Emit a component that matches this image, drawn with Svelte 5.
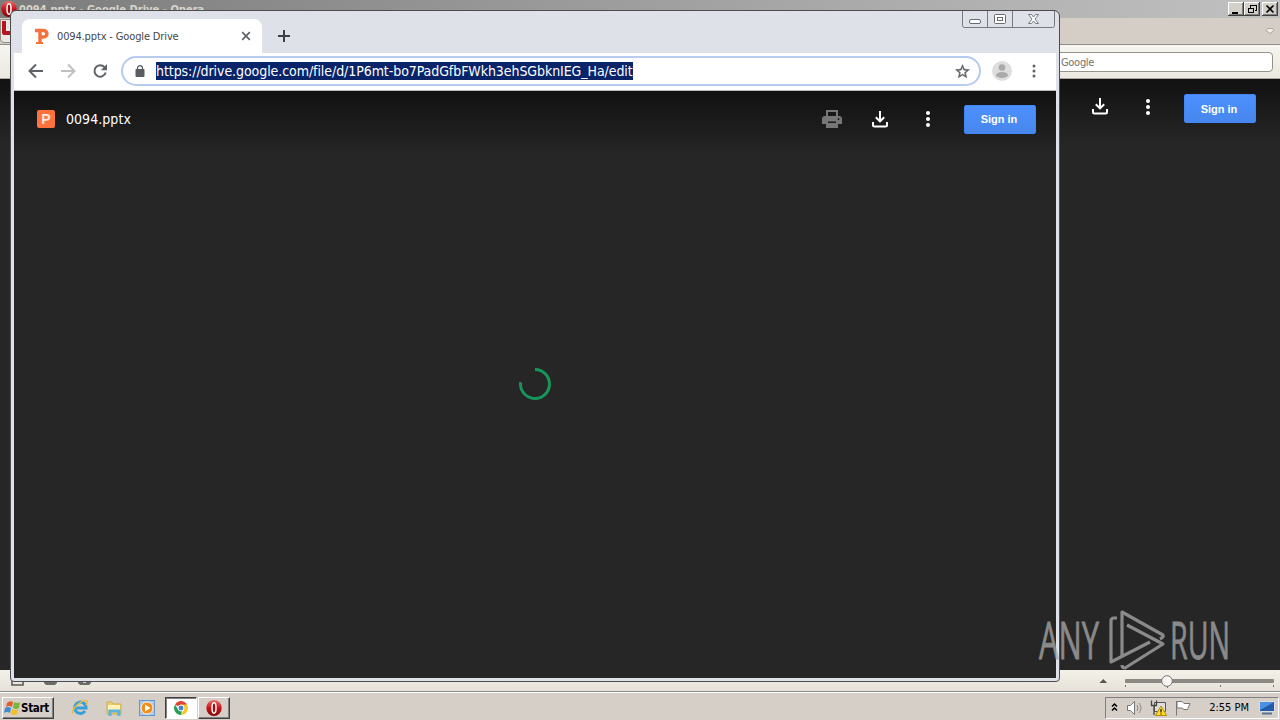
<script lang="ts">
  const fileName = '0094.pptx';
  const url = 'https://drive.google.com/file/d/1P6mt-bo7PadGfbFWkh3ehSGbknIEG_Ha/edit';
</script>

{#snippet downloadIcon()}
  <svg class="icon" width="16" height="17" viewBox="0 0 16 17" fill="none" stroke="#fff" stroke-width="2">
    <path d="M8 0v10M3.800 6.200L8 10.400l4.200-4.200M1 11v3q0 1.500 1.500 1.500h11Q15 15.500 15 14v-3" />
  </svg>
{/snippet}

{#snippet dots(color: string, r: number, gap: number)}
  <svg class="icon" width="6" height="18" viewBox="-3 -9 6 18" fill={color}>
    <circle cy={-gap} {r} /><circle {r} /><circle cy={gap} {r} />
  </svg>
{/snippet}

{#snippet operaIcon()}
  <svg class="icon" width="18" height="18" viewBox="0 0 18 18">
    <defs>
      <linearGradient id="opera" x2="0" y2="1">
        <stop stop-color="#ee7068" /><stop offset=".5" stop-color="#c8151b" /><stop offset="1" stop-color="#850509" />
      </linearGradient>
    </defs>
    <ellipse cx="9" cy="9" rx="7.7" ry="8" fill="url(#opera)" />
    <ellipse cx="9" cy="9" rx="2" ry="5.2" fill="#a00b10" stroke="#fff" stroke-width="1.500" />
  </svg>
{/snippet}

<div class="desktop">
  <section class="opera">
    <header class="opera-title">
      <span class="opera-logo">{@render operaIcon()}</span>
      <span class="opera-name">{fileName} - Google Drive - Opera</span>
      <div class="classic-buttons">
        <svg width="50" height="14" viewBox="0 0 50 14" shape-rendering="crispEdges">
          {#each [0, 16, 34] as x}
            <g transform="translate({x} 0)">
              <path fill="#404040" d="M0 0h16v14H0z" />
              <path fill="#fff" d="M0 0h15v13H0z" />
              <path fill="#808080" d="M1 1h14v12H1z" />
              <path fill="#d4d0c8" d="M1 1h13v11H1z" />
            </g>
          {/each}
          <path fill="#000" d="M4 10h6v2H4z" />
          <path fill="none" stroke="#000" d="M22.500 5.500V3h6v5h-2M22 3h7M20.500 6.500h5v4h-5zM20 6h6" />
          <path shape-rendering="auto" fill="none" stroke="#000" stroke-width="1.700" d="M38.500 3.500l7 7m0-7l-7 7" />
        </svg>
      </div>
    </header>
    <div class="opera-tabs">
      <span class="opera-menu"><i></i></span>
      <svg width="10" height="8" viewBox="0 0 10 8"><path d="M2.500 1.500h5L9 3.500l-4 3-4-3z" fill="#eeece8" stroke="#aaa69f" /></svg>
    </div>
    <div class="opera-tools"><div class="search">Google</div></div>
    <div class="page opera-page">
      {@render downloadIcon()}
      {@render dots('#fff', 2, 6)}
      <button class="signin">Sign in</button>
    </div>
    <footer class="opera-status">
      <svg class="panel-icons" width="84" height="17" viewBox="0 0 84 17" fill="none" stroke="#5d5c59" stroke-width="1.600">
        <path d="M2 4v11h11V5" /><path fill="#6d6c69" d="M34 11h13v2l-2 2h-9l-2-2zM68 11h13v2l-2 2h-9l-2-2z" stroke="none" /><path d="M73 12h3" stroke="#eee" />
      </svg>
      <svg width="181" height="20" viewBox="0 0 181 20">
        <path d="M5.500 13l3.800-4 3.800 4z" fill="#555" />
        <rect x="31" y="9" width="149" height="4" rx="1" fill="#8c8984" />
        <path d="M31.500 15v2M73.500 15v3M126.500 15v2M179.500 15v2" stroke="#77746f" />
        <circle cx="73" cy="11" r="5.300" fill="#f8f7f4" stroke="#777" />
      </svg>
    </footer>
  </section>

  <section class="chrome">
    <header class="tabstrip">
      <div class="tab">
        <svg width="14" height="17" viewBox="0 0 14 17" fill="none" stroke="#f5713e"><path stroke-width="3.400" d="M0 2.500h8.700a3 3 0 0 1 0 6.500H5M5 1v14" /><path stroke-width="2" d="M1 15h7" /></svg>
        <span class="tab-name">{fileName} - Google Drive</span>
        <svg width="10" height="10" viewBox="0 0 10 10" stroke="#5f6368" stroke-width="1.700"><path d="M1.200 1.200l7.600 7.600m0-7.600L1.200 8.800" /></svg>
      </div>
      <svg class="newtab" width="12" height="12" viewBox="0 0 12 12" stroke="#3c4043" stroke-width="2"><path d="M6 0v12M0 6h12" /></svg>
      <svg class="winbuttons" width="94" height="18" viewBox="0 0 94 18" fill="none" stroke="#777a80">
        <path d="M.5 0v14.500q0 2 2 2h88q2 0 2-2V0M25.500 0v16.500M50.500 0v16.500" />
        <rect x="7.500" y="8.500" width="11" height="4" rx="1.500" fill="#fff" stroke="#666970" />
        <rect x="32.500" y="3.500" width="11" height="9" rx="1" fill="#fff" stroke="#666970" />
        <rect x="35.500" y="6.500" width="5" height="3" stroke="#666970" />
        <path d="M66.500 3.500h3l2 2.500 2-2.500h3L73 8l3.500 4.500h-3l-2-2.500-2 2.500h-3L70 8z" fill="#fff" stroke="#777a80" />
      </svg>
    </header>
    <div class="toolbar">
      <svg class="nav" width="94" height="18" viewBox="0 0 94 18" fill="none" stroke="#5f6368" stroke-width="2">
        <path d="M15 9H2M8 2.500L1.500 9 8 15.500" />
        <path stroke="#bfc0c2" d="M33 9h13M40 2.500L46.500 9 40 15.500" />
        <path d="M76.500 5.200A5.700 5.700 0 1 0 77.700 10.500" />
        <path fill="#5f6368" stroke="none" d="M79 2v6.200h-6.200z" />
      </svg>
      <div class="omnibox">
        <svg width="10" height="12" viewBox="0 0 10 12"><path d="M2.500 5V3.200a2.500 2.500 0 0 1 5 0V5" fill="none" stroke="#5a5d61" stroke-width="1.300" /><rect x=".5" y="4" width="9" height="8" rx="1" fill="#5a5d61" /></svg>
        <span class="url">{url}</span>
        <svg class="star" width="17" height="17" viewBox="0 0 24 24" fill="#5f6368" stroke="#5f6368" stroke-width=".5"><path d="M22 9.240l-7.190-.62L12 2 9.190 8.630 2 9.240l5.460 4.730L5.820 21 12 17.270 18.180 21l-1.630-7.030L22 9.240zM12 15.400l-3.760 2.270 1-4.280-3.320-2.880 4.380-.38L12 6.100l1.710 4.040 4.380.38-3.320 2.880 1 4.280L12 15.400z" /></svg>
      </div>
      <svg class="avatar" width="20" height="20" viewBox="0 0 20 20"><circle cx="10" cy="10" r="10" fill="#dedede" /><circle cx="10" cy="6.500" r="3.300" fill="#aaa" /><ellipse cx="10" cy="14" rx="6" ry="3" fill="#aaa" /></svg>
      {@render dots('#5f6368', 1.5, 5)}
    </div>
    <main class="page chrome-page">
      <div class="drivebar">
        <span class="ppt">P</span>
        <span class="filename">{fileName}</span>
        <svg class="printer" width="20" height="18" viewBox="0 0 20 18" fill="#777">
          <path fill-rule="evenodd" d="M4 0h12v6h1a3 3 0 0 1 3 3v5h-4v4H4v-4H0V9a3 3 0 0 1 3-3h1zM6 2v4h8V2zM6 11.500V16h8v-4.500zM15.700 8.300h1.600v1.600h-1.600z" />
          <path d="M6 13h8v3H6z" />
        </svg>
        {@render downloadIcon()}
        {@render dots('#fff', 2, 6)}
        <button class="signin">Sign in</button>
      </div>
      <div class="loading">
        <svg width="34" height="34" viewBox="-17 -17 34 34"><path d="M0-14.500A14.500 14.500 0 1 1-14.400-1.800" fill="none" stroke="#18955b" stroke-width="3" /></svg>
      </div>
    </main>
  </section>

  <svg class="watermark" width="220" height="88" viewBox="-12 -12 220 88" fill="none" stroke="#a6a6a6" stroke-width="3.200" opacity=".78">
    <text x="2" y="50" textLength="60" lengthAdjust="spacingAndGlyphs">ANY</text>
    <text x="133" y="50" textLength="60" lengthAdjust="spacingAndGlyphs">RUN</text>
    <path stroke-linejoin="round" d="M80 9h-3q-3 0-3 3v41l39-20" />
    <path stroke-linejoin="round" d="M85 47V3l41 23q1 2-3 4" />
    <path stroke-linejoin="round" d="M90 16l36 19-38 24q-3 0-3-3" />
  </svg>

  <footer class="taskbar">
    <button class="start">
      <svg width="17" height="16" viewBox="0 0 17 16"><path fill="#e45b2d" d="M3 3q3-3 6-1L8 7Q5 5 2 7z" /><path fill="#79b63a" d="M10 2q3 2 6 0l-1 6q-3 2-6 0z" /><path fill="#3d8bd4" d="M1 8q3-2 6 0l-1 5q-3-2-6 0z" /><path fill="#f2bf27" d="M8 9q3 2 6 0l-1 5q-3 2-6 0z" /></svg>
      Start
    </button>
    <div class="quick">
      <svg width="18" height="18" viewBox="0 0 18 18" fill="none"><path d="M14 12a5.700 5.700 0 1 1 1-3H5" stroke="#36a0dc" stroke-width="3" /><path d="M2 15C-1 11 12-1 16 2c1 1 0 3-1 4" stroke="#e8bb42" stroke-width="1.500" /></svg>
      <svg width="18" height="18" viewBox="0 0 18 18"><path fill="#edcf70" stroke="#d4ad47" d="M2 3h5l1 2h8v10H2z" /><path fill="#fff2b8" d="M3 6h12v5H3z" /><path fill="none" stroke="#5ab4dc" stroke-width="3" d="M5 17v-5h9v5" /></svg>
      <svg width="16" height="16" viewBox="0 0 16 16"><rect x=".5" y=".5" width="15" height="15" fill="#a8cbea" stroke="#6598c7" /><circle cx="8" cy="8" r="6" fill="#f38b18" stroke="#fff1d8" /><path fill="#fff" d="M6 4.500v7L11.500 8z" /></svg>
    </div>
    <button class="task active">
      <svg width="14" height="14" viewBox="-7 -7 14 14"><path fill="#e04434" d="M0 0L-6-3.500A7 7 0 0 1 6-3.500z" /><path fill="#f6c72d" d="M0-3.500H6A7 7 0 0 1 0 7L3 1.500z" /><path fill="#289d54" d="M-6-3.500L-3 1.500 1 3 0 7A7 7 0 0 1-6-3.500z" /><circle r="3" fill="#4285d6" stroke="#fff" /></svg>
    </button>
    <button class="task">{@render operaIcon()}</button>
    <div class="tray">
      <svg width="82" height="18" viewBox="0 0 82 18" fill="none">
        <path d="M2 7.500L4.500 5 7 7.500M2 11.500L4.500 9 7 11.500" stroke="#000" stroke-width="1.500" />
        <path d="M17.500 6.500h3l4-4v13l-4-4h-3z" fill="#fff" stroke="#777" /><path d="M27 6q2 3 0 6M29 4q4 5 0 10" stroke="#888" />
        <path d="M44.500 3.500h11v9h-11z" fill="#ddd" stroke="#555" /><path d="M41.500 1.500v5h5v-5M44 7v9" stroke="#444" stroke-width="1.300" /><path d="M51 7l5.500 9.500h-11z" fill="#ffdb27" stroke="#b18d00" /><path d="M51 10v3.500m0 1v1" stroke="#222" stroke-width="1.300" />
        <path d="M66.500 2v14.500M67 2.500h5l2 2h6l-2.500 6H74l-2-1.500h-5z" fill="#fff" stroke="#777" />
      </svg>
      <time>2:55 PM</time>
      <svg width="16" height="14" viewBox="0 0 16 14"><path fill="#235bab" stroke="#ddd" d="M.5.500h15v10H.5z" /><path fill="#4b90e1" d="M1 1h14L1 9z" /><path stroke="#557299" stroke-width="2" d="M3 12.500h10" /></svg>
    </div>
  </footer>
</div>

<style>
  :global(body) {
    overflow: hidden;
    font-family: 'DejaVu Sans Condensed', 'DejaVu Sans', sans-serif;
  }
  .desktop {
    position: relative;
    width: 1280px;
    height: 720px;
    overflow: hidden;
    background: #d6cfc8;
  }
  svg {
    display: block;
    flex: none;
  }
  button {
    padding: 0;
    border: 0;
    font: inherit;
  }
  .opera {
    display: flex;
    flex-direction: column;
    height: 692px;
  }
  .opera-title {
    height: 18px;
    display: flex;
    align-items: center;
    background: linear-gradient(90deg, #7c7c7c, #c1c1c1);
    color: #d8d4cb;
    font: bold 11px 'DejaVu Sans Condensed', sans-serif;
  }
  .opera-logo {
    margin-right: 1px;
  }
  .opera-name {
    letter-spacing: 0.03px;
  }
  .classic-buttons {
    margin: 0 2px 0 auto;
  }
  .opera-tabs {
    display: flex;
    align-items: center;
    justify-content: space-between;
    height: 26px;
    padding-right: 5px;
    background: #d4cec6;
    border-bottom: 1px solid #908d88;
  }
  .opera-menu {
    width: 16px;
    height: 22px;
    border: 1px solid #8f8b85;
    border-radius: 0 0 4px 4px;
    background: #eae7e2;
  }
  .opera-menu i {
    display: block;
    width: 9px;
    height: 10px;
    margin: 1px;
    border: solid #b5151e;
    border-width: 0 0 4px 4px;
    border-bottom-left-radius: 3px;
  }
  .opera-tools {
    display: flex;
    justify-content: flex-end;
    align-items: center;
    height: 33px;
    background: linear-gradient(#f6f5ef, #ebe8df);
    border-bottom: 1px solid #aaa8a0;
  }
  .search {
    box-sizing: border-box;
    width: 240px;
    height: 20px;
    margin-right: 7px;
    padding-left: 27px;
    background: #fff;
    border: 1px solid #96938b;
    border-radius: 4px;
    color: #73726f;
    font-size: 11px;
    line-height: 19px;
    letter-spacing: -0.3px;
  }
  .page {
    background: linear-gradient(#111, #262626 64px);
  }
  .opera-page {
    flex: 1;
    display: flex;
    justify-content: flex-end;
    align-items: flex-start;
    gap: 37px;
    padding: 15px 24px 0 0;
  }
  .opera-page .icon {
    margin-top: 4px;
  }
  .signin {
    box-sizing: border-box;
    width: 72px;
    height: 29px;
    margin-left: -4px;
    padding-right: 2px;
    border: 1px solid #4285f4;
    border-radius: 2px;
    background: linear-gradient(#4d90fe, #4787ed);
    color: #fff;
    font: bold 11px 'Liberation Sans', sans-serif;
  }
  .opera-status {
    display: flex;
    justify-content: space-between;
    height: 21px;
    padding: 0 5px 0 10px;
    background: linear-gradient(#f4f1e8, #e6e2da);
    border-bottom: 1px solid #8e8b85;
  }
  .chrome {
    position: absolute;
    left: 10px;
    top: 10px;
    box-sizing: border-box;
    width: 1050px;
    height: 672px;
    display: flex;
    flex-direction: column;
    padding: 0 3px 3px;
    border: 1px solid #4b4d51;
    border-radius: 6px 6px 4px 4px;
    background: #dee1e7;
  }
  .tabstrip {
    display: flex;
    height: 42px;
    padding-left: 8px;
  }
  .tab {
    box-sizing: border-box;
    display: flex;
    align-items: center;
    width: 240px;
    height: 34px;
    margin-top: 8px;
    padding: 0 11px 0 13px;
    border-radius: 8px 8px 0 0;
    background: #fff;
  }
  .tab-name {
    flex: 1;
    margin-left: 8px;
    font-size: 11px;
    letter-spacing: -0.14px;
    color: #44474b;
    white-space: nowrap;
  }
  .newtab {
    margin: 19px 0 0 16px;
  }
  .winbuttons {
    margin-left: auto;
  }
  .toolbar {
    box-sizing: border-box;
    display: flex;
    align-items: center;
    height: 38px;
    padding: 0 19px 1px 14px;
    background: #fff;
    border-bottom: 1px solid #bbb;
  }
  .omnibox {
    box-sizing: border-box;
    width: 860px;
    height: 30px;
    display: flex;
    align-items: center;
    margin: 0 11px 0 -1px;
    padding: 0 8px 0 12px;
    border: 2px solid #b6cbee;
    border-radius: 15px;
  }
  .url {
    height: 18px;
    margin-left: 11px;
    background: #0a246a;
    color: #fff;
    font-size: 14px;
    line-height: 18px;
    letter-spacing: -0.07px;
    white-space: nowrap;
  }
  .star {
    margin-left: auto;
  }
  .avatar {
    margin-right: 19px;
  }
  .chrome-page {
    flex: 1;
    display: flex;
    flex-direction: column;
  }
  .drivebar {
    display: flex;
    align-items: center;
    height: 56px;
    padding: 0 20px 0 23px;
  }
  .ppt {
    width: 18px;
    height: 18px;
    border-radius: 2px;
    background: #ff713f;
    color: #ffe9df;
    font: bold 14px/18px 'Liberation Sans', sans-serif;
    text-align: center;
  }
  .filename {
    margin-left: 11px;
    color: #fff;
    font-size: 14px;
    letter-spacing: 0.05px;
  }
  .printer {
    margin: 0 30px 0 auto;
  }
  .drivebar .icon + .icon {
    margin-left: 37px;
  }
  .drivebar .signin {
    margin-left: 33px;
  }
  .loading {
    flex: 1;
    display: flex;
    align-items: flex-start;
    justify-content: center;
    padding-top: 220px;
  }
  .watermark {
    position: absolute;
    left: 1025px;
    top: 597px;
  }
  .watermark text {
    fill: #a6a6a6;
    stroke-width: 0.8px;
    font: 52px 'Open Sans', sans-serif;
  }
  .taskbar {
    box-sizing: border-box;
    display: flex;
    align-items: center;
    height: 28px;
    padding: 2px 1px 0 2px;
    border-top: 1px solid #fff;
    background: #d6cfc8;
  }
  .start,
  .task {
    box-sizing: border-box;
    display: flex;
    align-items: center;
    height: 22px;
    background: #d6cfc8;
    border: 1px solid;
    border-color: #fff #404040 #404040 #fff;
    box-shadow: inset -1px -1px #808080;
  }
  .start {
    width: 52px;
    padding-left: 1px;
    font: bold 11.5px 'DejaVu Sans Condensed', sans-serif;
    letter-spacing: -0.3px;
  }
  .quick {
    display: flex;
    align-items: center;
    gap: 16px;
    margin: 0 10px 0 17px;
  }
  .task {
    width: 32px;
    justify-content: center;
  }
  .task.active {
    margin-right: 1px;
    background: #fff;
    border-color: #404040 #fff #fff #404040;
    box-shadow: inset 1px 1px #808080;
  }
  .tray {
    box-sizing: border-box;
    display: flex;
    align-items: center;
    width: 174px;
    height: 22px;
    margin-left: auto;
    padding: 0 3px 0 4px;
    border: 1px solid;
    border-color: #808080 #fff #fff #808080;
    font-size: 11px;
  }
  time {
    flex: 1;
    padding-right: 10px;
    text-align: right;
    white-space: nowrap;
  }
</style>
